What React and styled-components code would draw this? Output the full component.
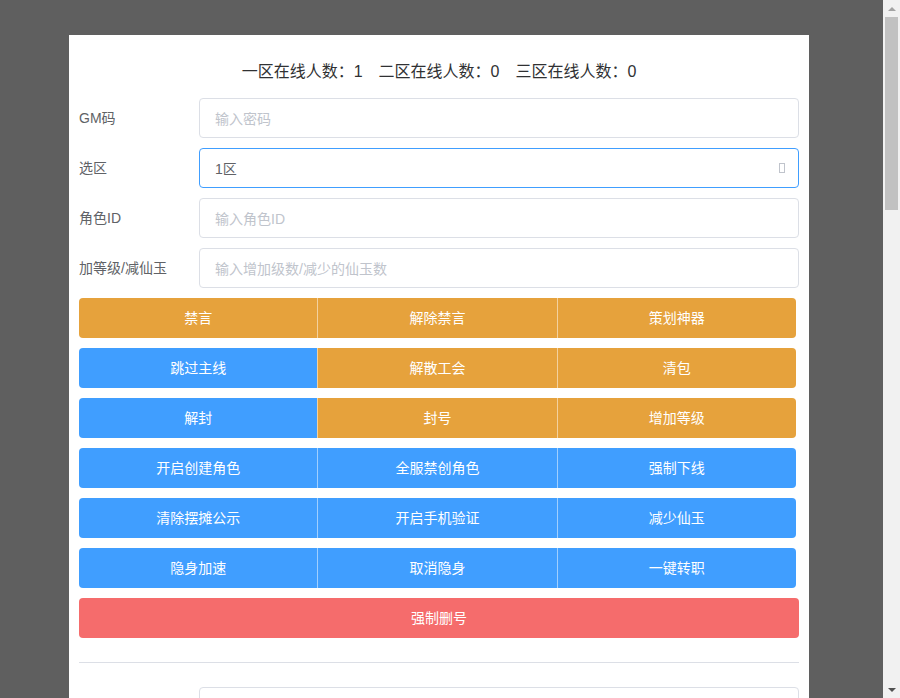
import styled, { createGlobalStyle } from "styled-components";

const GlobalStyle = createGlobalStyle`
    html, body {
        margin: 0;
        padding: 0;
        height: 100%;
        overflow: hidden;
    }
    body {
        font-family: "Liberation Sans", "Noto Sans CJK SC", sans-serif;
    }
    * {
        box-sizing: border-box;
    }
`

const fields = [
    { label: "GM码", placeholder: "输入密码" },
    { label: "选区", value: "1区", select: true },
    { label: "角色ID", placeholder: "输入角色ID" },
    { label: "加等级/减仙玉", placeholder: "输入增加级数/减少的仙玉数" },
]

const rows = [
    [["禁言", "warning"], ["解除禁言", "warning"], ["策划神器", "warning"]],
    [["跳过主线", "primary"], ["解散工会", "warning"], ["清包", "warning"]],
    [["解封", "primary"], ["封号", "warning"], ["增加等级", "warning"]],
    [["开启创建角色", "primary"], ["全服禁创角色", "primary"], ["强制下线", "primary"]],
    [["清除摆摊公示", "primary"], ["开启手机验证", "primary"], ["减少仙玉", "primary"]],
    [["隐身加速", "primary"], ["取消隐身", "primary"], ["一键转职", "primary"]],
]

const colors = {
    primary: "#409eff",
    warning: "#e6a23c",
    danger: "#f56c6c",
}

const Field = ({ label, placeholder, value, select }) => (
    <StyledRow>
        <StyledLabel>{label}</StyledLabel>
        <StyledInputBox $focus={select}>
            {value ? <StyledValue>{value}</StyledValue> : <StyledPlaceholder>{placeholder}</StyledPlaceholder>}
            {select && <StyledTofu />}
        </StyledInputBox>
    </StyledRow>
)

const App = () => {
    return (
        <StyledShell>
            <GlobalStyle />
            <StyledMain>
                <StyledCard>
                    <StyledTitle>一区在线人数：1　二区在线人数：0　三区在线人数：0</StyledTitle>
                    {fields.map((f) => (
                        <Field key={f.label} {...f} />
                    ))}
                    {rows.map((row, i) => (
                        <StyledGroup key={i}>
                            {row.map(([text, type]) => (
                                <StyledButton key={text} $type={type}>{text}</StyledButton>
                            ))}
                        </StyledGroup>
                    ))}
                    <StyledWide $type="danger">强制删号</StyledWide>
                    <StyledDivider />
                    <StyledRow>
                        <StyledLabel />
                        <StyledInputBox />
                    </StyledRow>
                </StyledCard>
            </StyledMain>
            <StyledScrollbar>
                <StyledArrow $up />
                <StyledTrack>
                    <StyledThumb />
                </StyledTrack>
                <StyledArrow />
            </StyledScrollbar>
        </StyledShell>
    )
}

const StyledShell = styled.div`
    display: flex;
    width: 100vw;
    height: 100vh;
    overflow: hidden;
`
const StyledMain = styled.div`
    flex: 1;
    background: #5f5f5f;
    padding: 35px 0 0 69px;
    overflow: hidden;
`
const StyledCard = styled.div`
    width: 740px;
    min-height: 800px;
    background: #fff;
    padding: 24px 10px 10px;
`
const StyledTitle = styled.div`
    text-align: center;
    font-size: 16px;
    line-height: 26px;
    color: #303133;
    margin-bottom: 13px;
`
const StyledRow = styled.div`
    display: flex;
    align-items: center;
    height: 40px;
    margin-bottom: 10px;
`
const StyledLabel = styled.div`
    width: 120px;
    font-size: 14px;
    color: #606266;
    line-height: 40px;
`
const StyledInputBox = styled.div`
    flex: 1;
    height: 40px;
    display: flex;
    align-items: center;
    justify-content: space-between;
    padding: 0 15px;
    border: 1px solid ${(p) => (p.$focus ? "#409eff" : "#dcdfe6")};
    border-radius: 4px;
    font-size: 14px;
`
const StyledPlaceholder = styled.span`
    color: #c0c4cc;
`
const StyledValue = styled.span`
    color: #606266;
`
const StyledTofu = styled.span`
    width: 6px;
    height: 10px;
    border: 1px solid #c0c4cc;
    margin-right: -2px;
`
const StyledGroup = styled.div`
    display: flex;
    width: 717px;
    margin-bottom: 10px;
`
const StyledButton = styled.div`
    flex: 1;
    height: 40px;
    line-height: 40px;
    text-align: center;
    font-size: 14px;
    color: #fff;
    background: ${(p) => colors[p.$type]};
    & + & {
        border-left: 1px solid rgba(255, 255, 255, 0.5);
    }
    &:first-child {
        border-radius: 4px 0 0 4px;
    }
    &:last-child {
        border-radius: 0 4px 4px 0;
    }
`
const StyledWide = styled.div`
    height: 40px;
    line-height: 40px;
    text-align: center;
    font-size: 14px;
    color: #fff;
    background: ${(p) => colors[p.$type]};
    border-radius: 4px;
`
const StyledDivider = styled.div`
    height: 1px;
    background: #dcdfe6;
    margin: 24px 0 24px;
`
const StyledScrollbar = styled.div`
    width: 17px;
    display: flex;
    flex-direction: column;
    background: #f1f1f1;
`
const StyledArrow = styled.div`
    height: 17px;
    display: flex;
    align-items: center;
    justify-content: center;
    &::after {
        content: "";
        border-left: 4px solid transparent;
        border-right: 4px solid transparent;
        ${(p) => (p.$up ? "border-bottom: 4px solid #a3a3a3;" : "border-top: 4px solid #505050;")}
    }
`
const StyledTrack = styled.div`
    flex: 1;
    padding: 0 2px;
`
const StyledThumb = styled.div`
    height: 193px;
    background: #c1c1c1;
`

export default App;
